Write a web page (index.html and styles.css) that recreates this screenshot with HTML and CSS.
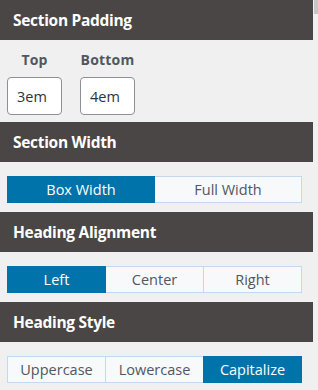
FILE: index.html
```html
<!DOCTYPE html>
<html>
<head>
<meta charset="utf-8">
<link rel="stylesheet" href="styles.css">
</head>
<body>
<div class="frame">
  <div class="panel">
    <div class="head">Section Padding</div>
    <div class="pad-body">
      <div class="field">
        <div class="label">Top</div>
        <div class="input">3em</div>
      </div>
      <div class="field">
        <div class="label">Bottom</div>
        <div class="input">4em</div>
      </div>
    </div>

    <div class="head">Section Width</div>
    <div class="btn-body">
      <div class="group">
        <div class="btn active">Box Width</div>
        <div class="btn">Full Width</div>
      </div>
    </div>

    <div class="head">Heading Alignment</div>
    <div class="btn-body">
      <div class="group">
        <div class="btn active">Left</div>
        <div class="btn">Center</div>
        <div class="btn">Right</div>
      </div>
    </div>

    <div class="head">Heading Style</div>
    <div class="btn-body">
      <div class="group">
        <div class="btn">Uppercase</div>
        <div class="btn">Lowercase</div>
        <div class="btn active">Capitalize</div>
      </div>
    </div>
  </div>
  <div class="track"><div class="thumb"></div></div>
</div>
</body>
</html>
```

FILE: styles.css
```css
html, body {
  margin: 0;
  padding: 0;
  background: #f0f0f0;
}
body {
  font-family: "Open Sans", "Noto Sans", sans-serif;
  width: 318px;
  height: 390px;
  overflow: hidden;
}
.frame {
  display: flex;
  width: 318px;
}
.panel {
  width: 313px;
  flex: none;
}
.track {
  width: 5px;
  flex: none;
  background: #f0f0f0;
}
.thumb {
  height: 14px;
  margin-left: 1px;
  background: #c6c6c6;
}
.head {
  height: 40px;
  background: #4a4645;
  color: #ffffff;
  font-weight: 700;
  font-size: 15.5px;
  line-height: 40px;
  padding-left: 13px;
  letter-spacing: -0.3px;
}
.pad-body {
  display: flex;
  gap: 18px;
  padding: 10px 0 7px 7px;
  height: 65px;
}
.field {
  display: flex;
  flex-direction: column;
  align-items: center;
  width: 55px;
}
.label {
  font-weight: 700;
  font-size: 14px;
  color: #50575e;
  height: 27px;
  line-height: 20px;
  white-space: nowrap;
  letter-spacing: 0.2px;
}
.input {
  box-sizing: border-box;
  width: 55px;
  height: 38px;
  background: #fff;
  border: 1px solid #8c8f94;
  border-radius: 4px;
  font-size: 14.5px;
  color: #2c3338;
  line-height: 37px;
  padding-left: 9px;
}
.btn-body {
  padding: 14px 0 9px 7px;
}
.group {
  display: flex;
  width: 295px;
  height: 27px;
  box-sizing: border-box;
}
.btn {
  flex: 1;
  box-sizing: border-box;
  height: 27px;
  line-height: 25px;
  text-align: center;
  font-size: 14.5px;
  color: #50575e;
  background: #f7f9fb;
  border: 1px solid #c5d9ee;
  margin-left: -1px;
}
.btn:first-child {
  margin-left: 0;
}
.btn.active {
  background: #0073aa;
  border-color: #0073aa;
  color: #ffffff;
  position: relative;
}
```
